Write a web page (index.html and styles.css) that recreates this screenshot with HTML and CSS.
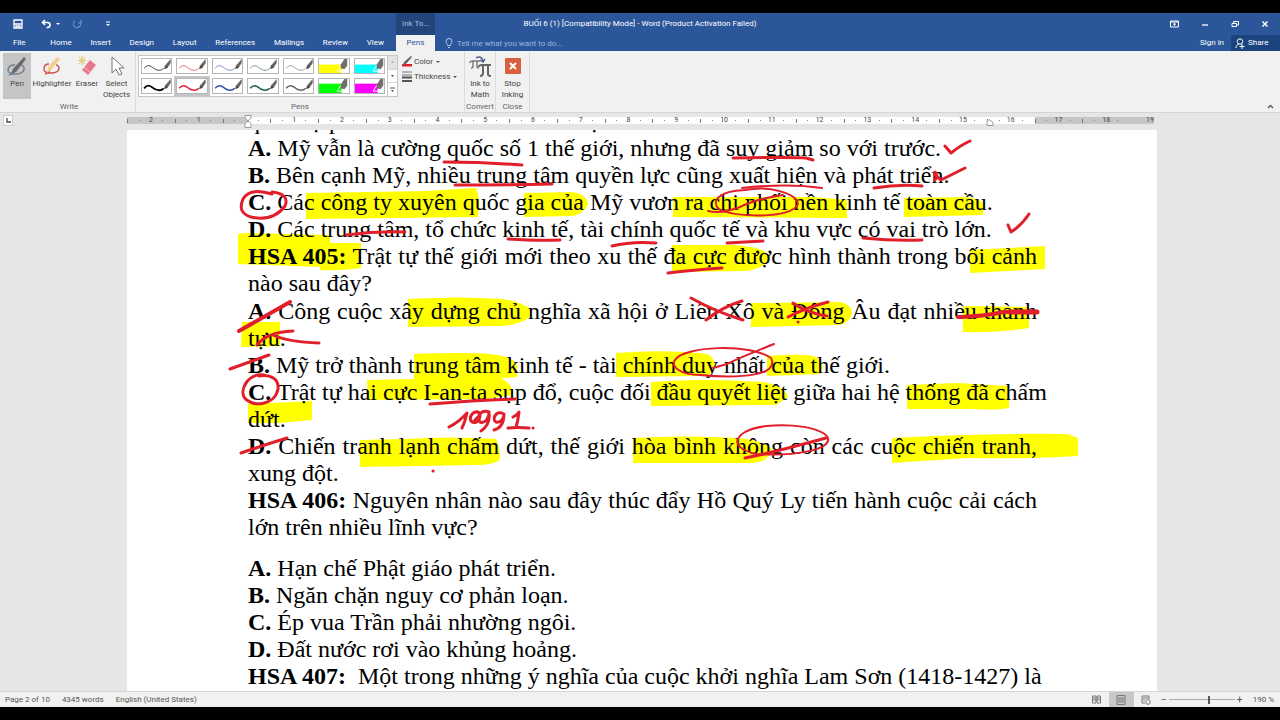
FILE: index.html
```html
<!DOCTYPE html>
<html lang="vi">
<head>
<meta charset="utf-8">
<title>BUỔI 6 (1) [Compatibility Mode] - Word</title>
<link rel="stylesheet" href="styles.css">
</head>
<body>
<svg class="defs" aria-hidden="true">
  <symbol id="nib" viewBox="0 0 10 15"><path d="M9 0v5L5 11l-4 1 1-4z" fill="#6b6464"/><path d="M1 12l2-4 2 3z" fill="#444"/></symbol>
  <symbol id="marker" viewBox="0 0 13 15"><path d="M1 13L5 7l4 6z" fill="none" stroke="#fff"/><path d="M12 0v7l-3 4-4-1 0-4 4-6z" fill="#756c6c"/></symbol>
</svg>
<div class="app">
  <header class="titlebar">
    <div class="title-left">
      <div class="quick">
        <button class="icon-btn" aria-label="Save"><svg width="10" height="10" viewBox="0 0 10 10"><path d="M1 1h8v8H1zM1 5h8M3 9V7h4v2" fill="none" stroke="#fff" stroke-width="1.3"/></svg></button>
        <button class="icon-btn undo" aria-label="Undo"><svg width="20" height="10" viewBox="0 0 20 10"><path d="M4 1L1.500 3.500 4 6M2 3.500h4.500a2.500 2.500 0 0 1 0 5H5.500" fill="none" stroke="#fff" stroke-width="1.600"/><path d="M15 4h4l-2 2z" fill="#fff"/></svg></button>
        <button class="icon-btn redo" aria-label="Repeat"><svg width="9" height="10" viewBox="0 0 9 10"><path d="M2 2a3.600 3.600 0 1 0 5 1M5 4h3V1" fill="none" stroke="#6f92cb" stroke-width="1.200"/></svg></button>
        <button class="icon-btn more" aria-label="Customize Quick Access Toolbar"><svg width="6" height="8" viewBox="0 0 6 8"><path d="M1 2h4" stroke="#fff"/><path d="M1 4h4L3 6z" fill="#fff"/></svg></button>
      </div>
      <div class="context">Ink To...</div>
    </div>
    <h1 class="title">BUỔI 6 (1) [Compatibility Mode] - Word (Product Activation Failed)</h1>
    <div class="window">
      <button class="icon-btn" aria-label="Ribbon Display Options"><svg width="9" height="8" viewBox="0 0 9 8"><path d="M.5 1h8v6h-8zM.5 2h8M4.500 6V3.500M3 4.500l1.500-1 1.500 1" fill="none" stroke="#fff"/></svg></button>
      <button class="icon-btn" aria-label="Minimize"><svg width="8" height="8" viewBox="0 0 8 8"><path d="M1 5h6" stroke="#fff" stroke-width="1.300"/></svg></button>
      <button class="icon-btn" aria-label="Restore"><svg width="8" height="8" viewBox="0 0 8 8"><path d="M1 3.500h4.500v3H1zM2.500 3V1.500h5v3.500H6" fill="none" stroke="#fff"/></svg></button>
      <button class="icon-btn" aria-label="Close"><svg width="8" height="8" viewBox="0 0 8 8"><path d="M1.500 1.500l5 5M6.500 1.500l-5 5" stroke="#fff" stroke-width="1.500"/></svg></button>
    </div>
  </header>
  <div class="tabbar">
    <nav class="tabs">
      <button class="tab file">File</button><button class="tab">Home</button><button class="tab">Insert</button><button class="tab">Design</button><button class="tab">Layout</button><button class="tab">References</button><button class="tab">Mailings</button><button class="tab">Review</button><button class="tab">View</button>
    </nav>
    <button class="tab active">Pens</button>
    <label class="tell"><svg width="8" height="11" viewBox="0 0 8 11"><path d="M2.500 7.500C2.500 6 1 5.500 1 3.500a3 3 0 0 1 6 0c0 2-1.500 2.500-1.500 4zM3 9.500h2" fill="none" stroke="#b9cbe8"/></svg><input type="text" placeholder="Tell me what you want to do..." aria-label="Tell me what you want to do"></label>
    <button class="tab signin">Sign in</button>
    <button class="tab share"><svg width="10" height="11" viewBox="0 0 10 11"><circle cx="5" cy="3.500" r="2.700" fill="none" stroke="#fff"/><path d="M1 10c0-2 1-3.500 3-4M7 6v5M4.500 8.500h5" fill="none" stroke="#fff"/></svg>Share</button>
  </div>
  <section class="ribbon" aria-label="Pens">
    <div class="group write">
      <div class="row">
        <button class="tool selected"><svg width="20" height="22" viewBox="0 0 20 22"><path d="M8 9C2 9 1 12 1 14c0 3 4 4 8 4s9-2 8-6c0-2-2-3-3-3M2 19c5-1 6-4 5-7" fill="none" stroke="#6d7f91" stroke-width="1.400"/><path d="M17 1l2 2-10 13-5 2 2-5z" fill="#6b6969"/></svg>Pen</button>
        <button class="tool wide"><svg width="20" height="22" viewBox="0 0 20 22"><path d="M7 8c-4 0-5 3-5 5 0 3 4 4 7 4s8-1 8-5c0-2-2-3-3-3M3 18c4-1 5-3 5-6" fill="none" stroke="#cf4e4e" stroke-width="1.400"/><path d="M15 1l3 2-8 10-5 4 1-6z" fill="#f4cf91"/></svg>Highlighter</button>
        <button class="tool"><svg width="20" height="22" viewBox="0 0 20 22"><path d="M13 4l6 5-8 10-6-5z" fill="#e8788c"/><path d="M7 11l6 5" stroke="#f7c4cc"/><path d="M5 0v9M1 4.500h8M2 1l6 7M8 1L2 8" stroke="#e4c269"/></svg>Eraser</button>
        <button class="tool select"><svg width="20" height="22" viewBox="0 0 20 22"><path d="M5 1v16l4-4 3 6 3-1-3-6h5z" fill="#fff" stroke="#777"/></svg>Select<br>Objects</button>
      </div>
      <span class="caption">Write</span>
    </div>
    <div class="group pens">
      <div class="row pens-row">
        <div class="gallery">
          <div class="swatches">
            <button class="pen" aria-label="Black pen 0.35 mm"><svg viewBox="0 0 31 15"><path d="M2 10c5-6 8-1 12 1s7 1 9-1" fill="none" stroke="#333"/><use href="#nib" x="22" y="0" width="10" height="13"/></svg></button>
            <button class="pen" aria-label="Red pen 0.35 mm"><svg viewBox="0 0 31 15"><path d="M2 10c5-6 8-1 12 1s7 1 9-1" fill="none" stroke="#e66"/><use href="#nib" x="22" y="0" width="10" height="13"/></svg></button>
            <button class="pen" aria-label="Blue pen 0.35 mm"><svg viewBox="0 0 31 15"><path d="M2 10c5-6 8-1 12 1s7 1 9-1" fill="none" stroke="#7189c7"/><use href="#nib" x="22" y="0" width="10" height="13"/></svg></button>
            <button class="pen" aria-label="Green pen 0.35 mm"><svg viewBox="0 0 31 15"><path d="M2 10c5-6 8-1 12 1s7 1 9-1" fill="none" stroke="#709080"/><use href="#nib" x="22" y="0" width="10" height="13"/></svg></button>
            <button class="pen" aria-label="Gray pen 0.35 mm"><svg viewBox="0 0 31 15"><path d="M2 10c5-6 8-1 12 1s7 1 9-1" fill="none" stroke="#999"/><use href="#nib" x="22" y="0" width="10" height="13"/></svg></button>
            <button class="pen" aria-label="Yellow highlighter"><svg viewBox="0 0 31 15"><path d="M-2 6h26v10H-2z" fill="#ff0"/><use href="#marker" x="18" y="0" width="13" height="15"/></svg></button>
            <button class="pen" aria-label="Turquoise highlighter"><svg viewBox="0 0 31 15"><path d="M-2 6h26v10H-2z" fill="#0ff"/><use href="#marker" x="18" y="0" width="13" height="15"/></svg></button>
            <button class="pen" aria-label="Black pen 0.5 mm"><svg viewBox="0 0 31 15"><path d="M2 10c5-6 8-1 12 1s7 1 9-1" fill="none" stroke="#000" stroke-width="2"/><use href="#nib" x="22" y="0" width="10" height="13"/></svg></button>
            <button class="pen chosen" aria-label="Red pen 0.5 mm"><svg viewBox="0 0 31 15"><path d="M2 10c5-6 8-1 12 1s7 1 9-1" fill="none" stroke="#e0203c" stroke-width="1.600"/><use href="#nib" x="22" y="0" width="10" height="13"/></svg></button>
            <button class="pen" aria-label="Blue pen 0.5 mm"><svg viewBox="0 0 31 15"><path d="M2 10c5-6 8-1 12 1s7 1 9-1" fill="none" stroke="#2f4fa8" stroke-width="1.600"/><use href="#nib" x="22" y="0" width="10" height="13"/></svg></button>
            <button class="pen" aria-label="Green pen 0.5 mm"><svg viewBox="0 0 31 15"><path d="M2 10c5-6 8-1 12 1s7 1 9-1" fill="none" stroke="#245c3c" stroke-width="1.600"/><use href="#nib" x="22" y="0" width="10" height="13"/></svg></button>
            <button class="pen" aria-label="Gray pen 0.5 mm"><svg viewBox="0 0 31 15"><path d="M2 10c5-6 8-1 12 1s7 1 9-1" fill="none" stroke="#666" stroke-width="1.600"/><use href="#nib" x="22" y="0" width="10" height="13"/></svg></button>
            <button class="pen" aria-label="Green highlighter"><svg viewBox="0 0 31 15"><path d="M-2 5h26v11H-2z" fill="#0f0"/><use href="#marker" x="18" y="0" width="13" height="15"/></svg></button>
            <button class="pen" aria-label="Pink highlighter"><svg viewBox="0 0 31 15"><path d="M-2 5h26v11H-2z" fill="#f0f"/><use href="#marker" x="18" y="0" width="13" height="15"/></svg></button>
          </div>
          <div class="scroller">
            <button class="dim" aria-label="Row up"><svg width="5" height="4" viewBox="0 0 5 4"><path d="M1 3h3L2.500 1z" fill="#aaa"/></svg></button>
            <button aria-label="Row down"><svg width="5" height="4" viewBox="0 0 5 4"><path d="M1 1h3L2.500 3z" fill="#555"/></svg></button>
            <button aria-label="More pens"><svg width="5" height="6" viewBox="0 0 5 6"><path d="M0 1h5" stroke="#555"/><path d="M1 3h3L2.500 5z" fill="#555"/></svg></button>
          </div>
        </div>
        <div class="options">
          <button class="opt"><svg width="12" height="11" viewBox="0 0 12 11"><path d="M1 8h10v2.500H1z" fill="#e0202c"/><path d="M10 0l1 1-6 7-3 1 1-3z" fill="#666"/></svg>Color<i class="drop"></i></button>
          <button class="opt"><svg width="12" height="11" viewBox="0 0 12 11"><path d="M1 1h10M1 4h10" stroke="#777"/><path d="M1 6.500h10M1 10h10" stroke="#555" stroke-width="2"/></svg>Thickness<i class="drop"></i></button>
        </div>
      </div>
      <span class="caption">Pens</span>
    </div>
    <div class="group convert">
      <button class="tool"><svg width="24" height="22" viewBox="0 0 24 22"><path d="M2 7c0-2 1-2 3-2h7M5 5v5c0 2-1 2-2 2M9 5v6c0 1 1 1 2 1" fill="none" stroke="#777" stroke-width="1.400"/><path d="M11 11c0-2 1-2 3-2h9M15 9v8c0 2-1 3-3 3M20 9v9c0 2 1 2 3 2" fill="none" stroke="#666" stroke-width="2"/><path d="M8 2c3-2 6-1 7 3M12 4l3 2 2-3" fill="none" stroke="#4e5d86" stroke-width="1.400"/></svg>Ink to<br>Math</button>
      <span class="caption">Convert</span>
    </div>
    <div class="group close">
      <button class="tool"><svg width="18" height="22" viewBox="0 0 18 22"><rect x="1" y="2" width="16" height="16" rx="1" fill="#d9603f"/><path d="M6 7l6 6M12 7l-6 6" stroke="#fff" stroke-width="2"/></svg>Stop<br>Inking</button>
      <span class="caption">Close</span>
    </div>
    <button class="collapse" aria-label="Collapse the Ribbon"><svg width="7" height="5" viewBox="0 0 7 5"><path d="M1 4l2.500-2.500L6 4" fill="none" stroke="#555" stroke-width="1.300"/></svg></button>
  </section>
  <div class="rulerbar">
    <button class="tabstop" aria-label="Left tab"><svg width="5" height="5" viewBox="0 0 5 5"><path d="M1 0v4h4" fill="none" stroke="#444" stroke-width="1.300"/></svg></button>
    <div class="ruler">
      <span>2</span><span>1</span><span class="zero"></span><span>1</span><span>2</span><span>3</span><span>4</span><span>5</span><span>6</span><span>7</span><span>8</span><span>9</span><span>10</span><span>11</span><span>12</span><span>13</span><span>14</span><span>15</span><span>16</span><span>17</span><span>18</span><span class="last">19</span>
      <svg class="indent" width="8" height="13" viewBox="0 0 8 13"><path d="M1 .5h6v2.500l-3 3-3-3zM4 6l3 2.500v4H1v-4z" fill="#fff" stroke="#999"/></svg>
      <svg class="indent-right" width="8" height="7" viewBox="0 0 8 7"><path d="M1 6.500v-4l2-2 4 3v3z" fill="#fff" stroke="#999"/></svg>
    </div>
  </div>
  <main class="workspace">
    <article class="page">
      <svg class="layer" viewBox="0 0 1030 562" aria-hidden="true">
        <g transform="translate(-127 -130)" fill="#ff0">
          <path d="M306 193l120-2 50-3q5 12 2 29l-80 1-92 1z"/>
          <path d="M524 193l48-1q15 2 16 12-3 9-15 12l-49 1z"/>
          <path d="M673 197h140l34 3v18l-174-1z"/>
          <path d="M904 198l60-1q20 1 19 10v8l-79 2z"/>
          <path d="M238 234l6-1 86 2v8h31v25q-20 3-41 2v-3l-82-3z"/>
          <path d="M672 245h62q32 2 36 12-3 11-25 14l-73 1z"/>
          <path d="M970 250l75-4v23l-75 4z"/>
          <path d="M408 299q50-3 94 0 25 4 30 13-2 11-30 14l-94 1z"/>
          <path d="M751 303l90-1q11 3 11 11-2 10-14 12l-87 2z"/>
          <path d="M963 306l66 1v21q-30 5-66 4z"/>
          <path d="M242 322h38v24l-39 1z"/>
          <path d="M414 354q50-2 76 0 24 2 27 12v11l-52 4-51 1z"/>
          <path d="M616 353q50-4 91 1 8 4 8 12-2 10-14 10l-85 1z"/>
          <path d="M767 356q40-3 49 1 10 8 4 17l-53 2z"/>
          <path d="M367 380l49-1 1-3 84 2q12 6 12 17l-28 4-117 1z"/>
          <path d="M651 382q50-4 112 0 22 4 25 15l-12 8-125 1z"/>
          <path d="M907 385l50-2 52 3v22q-15 3-35 1h-67z"/>
          <path d="M248 404l64-3v19l-32 3h-32z"/>
          <path d="M360 440l45-1q45-3 91 0 4 8 4 20-5 6-25 6l-115 2z"/>
          <path d="M633 438q50-3 106 0 25 3 33 11-2 12-19 14H633z"/>
          <path d="M892 438q85-5 175-4l11 4v18q-45 3-110 2l-76 5z"/>
        </g>
      </svg>
      <div class="text">
        <p>quân sự phát triển khác nhau của một</p>
        <p><b>A.</b> Mỹ vẫn là cường quốc số 1 thế giới, nhưng đã suy giảm so với trước.</p>
        <p><b>B.</b> Bên cạnh Mỹ, nhiều trung tâm quyền lực cũng xuất hiện và phát triển.</p>
        <p><b>C.</b> Các công ty xuyên quốc gia của Mỹ vươn ra chi phối nền kinh tế toàn cầu.</p>
        <p><b>D.</b> Các trung tâm, tổ chức kinh tế, tài chính quốc tế và khu vực có vai trò lớn.</p>
        <p class="question"><b>HSA 405:</b> Trật tự thế giới mới theo xu thế đa cực được hình thành trong bối cảnh nào sau đây?</p>
        <p><b>A.</b> Công cuộc xây dựng chủ nghĩa xã hội ở Liên Xô và Đông Âu đạt nhiều thành tựu.</p>
        <p><b>B.</b> Mỹ trở thành trung tâm kinh tế - tài chính duy nhất của thế giới.</p>
        <p class="loose"><b>C.</b> Trật tự hai cực I-an-ta sụp đổ, cuộc đối đầu quyết liệt giữa hai hệ thống đã chấm<br>dứt.</p>
        <p><b>D.</b> Chiến tranh lạnh chấm dứt, thế giới hòa bình không còn các cuộc chiến tranh, xung đột.</p>
        <p class="question"><b>HSA 406:</b> Nguyên nhân nào sau đây thúc đẩy Hồ Quý Ly tiến hành cuộc cải cách lớn trên nhiều lĩnh vực?</p>
        <p class="answers"><b>A.</b> Hạn chế Phật giáo phát triển.</p>
        <p><b>B.</b> Ngăn chặn nguy cơ phản loạn.</p>
        <p><b>C.</b> Ép vua Trần phải nhường ngôi.</p>
        <p><b>D.</b> Đất nước rơi vào khủng hoảng.</p>
        <p class="loose"><b>HSA 407:</b>&nbsp; Một trong những ý nghĩa của cuộc khởi nghĩa Lam Sơn (1418-1427) là</p>
        <p>vì quốc gia dân tộc vẫn được</p>
      </div>
      <svg class="layer" viewBox="0 0 1030 562" aria-hidden="true">
        <g transform="translate(-127 -130)" fill="none" stroke="#e01f2b" stroke-width="3" stroke-linecap="round" stroke-linejoin="round">
          <path d="M444 162q40 0 78 3M455 185q45 0 97-1M346 235q30-4 59-3M508 239q30 2 52 1M612 246q20-5 44-3M733 158q60-1 73 0l7 2M945 146l6 7q10-8 19-12M874 188q25-4 48-2M935 172l2 4-2 4M935 175l6 5 24-12M727 243l36-2M863 238q30 3 59 2M1008 225l3 7q10-6 18-18M668 273q25-3 54-5"/>
          <path d="M272 194q-22-7-29 5-6 14 8 18 22 5 34-11 5-12-13-14" />
          <path d="M742 188q45-5 80 0M745 190c25-5 52 4 53 14-5 15-65 14-79 5-8-7-2-18 26-19M708 211q14 3 32-4 16-8 43-12" stroke-width="2"/>
          <path d="M239 331q30-17 51-29" stroke-width="4"/>
          <path d="M257 345q10-13 36-14M273 335q15 7 46 8M230 369l39-14M241 453q20-7 46-15"/>
          <path d="M264 375c-16-2-24 14-20 22 7 11 31 9 34-8 1-10-7-15-19-13"/>
          <path d="M430 404q45-4 85-5"/>
          <path d="M449 427q10-5 18-14-2 9-5 15M480 413c-7-4-11 4-9 8 5 4 9-1 9-6l-5 5M489 412c-8-3-13 5-9 10 5 2 9-4 9-9 1 8-2 14-8 18M502 413c-7-2-10 7-6 9 5 1 8-4 8-8 0 8-3 14-10 16M513 417q4-2 6-5-1 9-3 15M508 428q10-1 21 0" stroke-width="3"/>
          <path d="M533 428h.1M433 471h.1M798 322h.1"/>
          <path d="M691 298q25 14 52 22M742 301q-20 6-36 19M793 303q14 10 34 13M828 302q-23 6-40 15"/>
          <path d="M958 317q30-1 45-5h34" stroke-width="4"/>
          <path d="M1010 312h27" stroke-width="5"/>
          <path d="M700 375c-20 0-30-9-25-15 8-14 75-17 96-2 9 17-30 21-71 17M774 344q-35 14-47 20l-14 4" stroke-width="2"/>
          <path d="M745 458q30-6 81-20" stroke-width="3"/>
          <path d="M760 455c-25-5-28-15-15-23 22-12 78-7 83 6 3 13-38 18-68 16" stroke-width="2"/>
        </g>
      </svg>
    </article>
  </main>
  <footer class="status">
    <span>Page 2 of 10</span><span>4345 words</span><span>English (United States)</span>
    <div class="views">
      <button class="view" aria-label="Read Mode"><svg width="9" height="9" viewBox="0 0 9 9"><path d="M.5 1h3.500v7H.5zM5 1h3.500v7H5zM1 3h3M1 5h3M5 3h3M5 5h3" fill="none" stroke="#777"/></svg></button>
      <button class="view on" aria-label="Print Layout"><svg width="10" height="10" viewBox="0 0 10 10"><path d="M1 .5h8v9H1zM2 3h6M2 5h6M2 7h6" fill="none" stroke="#777"/></svg></button>
      <button class="view" aria-label="Web Layout"><svg width="10" height="10" viewBox="0 0 10 10"><path d="M4 8H1V1h7v3M2 3h5M2 5h2" fill="none" stroke="#777"/><circle cx="7" cy="7" r="2.300" fill="none" stroke="#777"/></svg></button>
      <button class="step" aria-label="Zoom Out">−</button>
      <input class="zoom" type="range" min="0" max="100" value="61" aria-label="Zoom">
      <button class="step" aria-label="Zoom In">+</button>
      <span class="percent">190 %</span>
    </div>
  </footer>
</div>
</body>
</html>
```
FILE: styles.css
```css
* { box-sizing: border-box; }
body { margin: 0; background: #000; font-family: Roboto, "Noto Sans", sans-serif; font-size: 8px; color: #444; }
button, input { font: inherit; color: inherit; border: 0; padding: 0; margin: 0; background: none; }
svg { display: block; flex: none; }
.defs { position: absolute; width: 0; height: 0; }
.app { display: flex; flex-direction: column; height: 100vh; padding: 13px 0; }

.titlebar { flex: none; display: grid; grid-template-columns: 1fr auto 1fr; height: 22px; background: #2b579a; color: #fff; align-items: stretch; }
.title-left { display: flex; }
.quick { display: flex; align-items: center; width: 396px; padding-left: 13px; }
.undo { margin-left: 18px; }
.redo { margin-left: 12px; }
.more { margin-left: 23px; }
.context { width: 39px; padding-left: 6px; line-height: 22px; background: #22467c; color: #a9bddb; white-space: nowrap; overflow: hidden; }
.title { margin: 0; font-size: 8px; font-weight: 400; line-height: 22px; }
.window { display: flex; align-items: center; justify-content: flex-end; gap: 22px; padding-right: 11px; }

.tabbar { flex: none; display: flex; height: 16px; background: #2b579a; color: #fff; }
.tabs { display: flex; justify-content: space-between; width: 396px; padding: 0 12px 0 13px; }
.tab { line-height: 16px; white-space: nowrap; }
.file { margin-right: 6px; }
.active { width: 39px; background: #f1f1f1; color: #2b579a; }
.tell { display: flex; flex: 1; align-items: center; gap: 4px; padding-left: 10px; }
.tell input { width: 140px; outline: 0; }
.tell input::placeholder { color: #9db6de; opacity: 1; }
.signin { padding-right: 7px; }
.share { display: flex; align-items: center; gap: 3px; width: 49px; padding-left: 4px; background: #1b437e; }

.ribbon { flex: none; display: flex; height: 62px; background: #f1f1f1; border-bottom: 1px solid #d5d5d5; }
.group { display: flex; flex-direction: column; align-items: center; justify-content: space-between; padding: 2px 0 0; border-right: 1px solid #dcdcdc; }
.row { display: flex; }
.write { width: 136px; padding-left: 3px; align-items: flex-start; }
.write .caption { align-self: center; }
.tool { display: flex; flex-direction: column; align-items: center; width: 28px; height: 46px; padding-top: 3px; line-height: 11px; white-space: nowrap; text-align: center; }
.selected { background: #c5c5c5; }
.wide { width: 42px; }
.select { width: 31px; }
.caption { line-height: 11px; color: #666; }
.pens { width: 329px; }
.pens-row { align-self: stretch; padding-left: 2px; gap: 3px; }
.gallery { display: flex; width: 260px; height: 42px; margin-top: 2px; border: 1px solid #c6c6c6; background: #fff; }
.swatches { flex: 1; display: grid; grid-template-columns: repeat(7, 1fr); gap: 4px; padding: 2px; align-content: center; }
.pen { height: 16px; border: 1px solid #b5b5b5; background: #fff; overflow: hidden; }
.pen svg { width: 100%; height: 100%; }
.chosen { outline: 2px solid #c5c5c5; }
.scroller { display: flex; flex-direction: column; width: 10px; border-left: 1px solid #c6c6c6; }
.scroller button { display: grid; place-items: center; flex: 1; }
.scroller button + button { border-top: 1px solid #d5d5d5; }
.dim { background: #e3e3e3; }
.options { display: flex; flex-direction: column; gap: 4px; padding-top: 3px; }
.opt { display: flex; align-items: center; gap: 1px; height: 11px; white-space: nowrap; }
.drop { margin-left: 2px; border: 2px solid transparent; border-top-color: #555; border-bottom: 0; }
.convert { width: 31px; }
.close { width: 34px; }
.collapse { display: flex; align-items: flex-end; margin-left: auto; padding: 0 6px 3px; }

.rulerbar { flex: none; display: flex; justify-content: center; position: relative; height: 17px; padding-left: 4px; background: #e6e6e6; }
.tabstop { position: absolute; left: 3px; top: 2px; display: grid; place-items: center; width: 10px; height: 11px; background: #fff; border: 1px solid #ccc; }
.ruler { position: relative; display: grid; grid-template-columns: repeat(21, 2fr) 1fr; width: 1030px; height: 7px; margin-top: 4px; padding-right: 3px; line-height: 7px; font-size: 7px; text-align: center; background: linear-gradient(90deg, #c6c6c6 120px, #fff 120px, #fff 908px, #c6c6c6 908px, #c6c6c6 1027px, transparent 1027px); }
.ruler span { background: linear-gradient(#777, #777) 0 50% / 1px 4px no-repeat, linear-gradient(#888, #888) 25% 50% / 1px 1px no-repeat, linear-gradient(#888, #888) 75% 50% / 1px 1px no-repeat; }
.ruler .last { background: none; text-align: right; }
.indent { position: absolute; left: 117px; top: -2px; }
.indent-right { position: absolute; left: 859px; top: 2px; }

.workspace { flex: 1; display: flex; justify-content: center; min-height: 0; overflow: hidden; padding-left: 4px; background: #e6e6e6; }
.page { position: relative; width: 1030px; background: #fff; overflow: hidden; }
.layer { position: absolute; left: 0; top: 0; width: 1030px; height: 562px; }
.text { position: relative; margin-top: -22px; padding: 0 120px 0 121px; font: 24px/27px "Liberation Serif", "Times New Roman", serif; color: #000; text-align: justify; }
.text p { margin: 0; }
.text .question { margin-bottom: 1px; }
.text .answers { margin-top: 14px; }
.text .loose { white-space: nowrap; }

.status { flex: none; display: flex; align-items: center; gap: 12px; height: 16px; padding: 0 6px 0 5px; background: #f1f1f1; border-top: 1px solid #d5d5d5; color: #555; }
.views { display: flex; align-items: center; align-self: stretch; margin-left: auto; }
.view { display: grid; place-items: center; align-self: stretch; width: 25px; }
.on { background: #c8c8c8; }
.step { width: 10px; font-size: 10px; line-height: 10px; }
.zoom { appearance: none; width: 66px; height: 10px; background: linear-gradient(#aaa, #aaa) 0 50% / 100% 1px no-repeat; }
.zoom::-webkit-slider-thumb { appearance: none; width: 2px; height: 8px; background: #555; }
.percent { margin-left: 8px; white-space: nowrap; }
```
